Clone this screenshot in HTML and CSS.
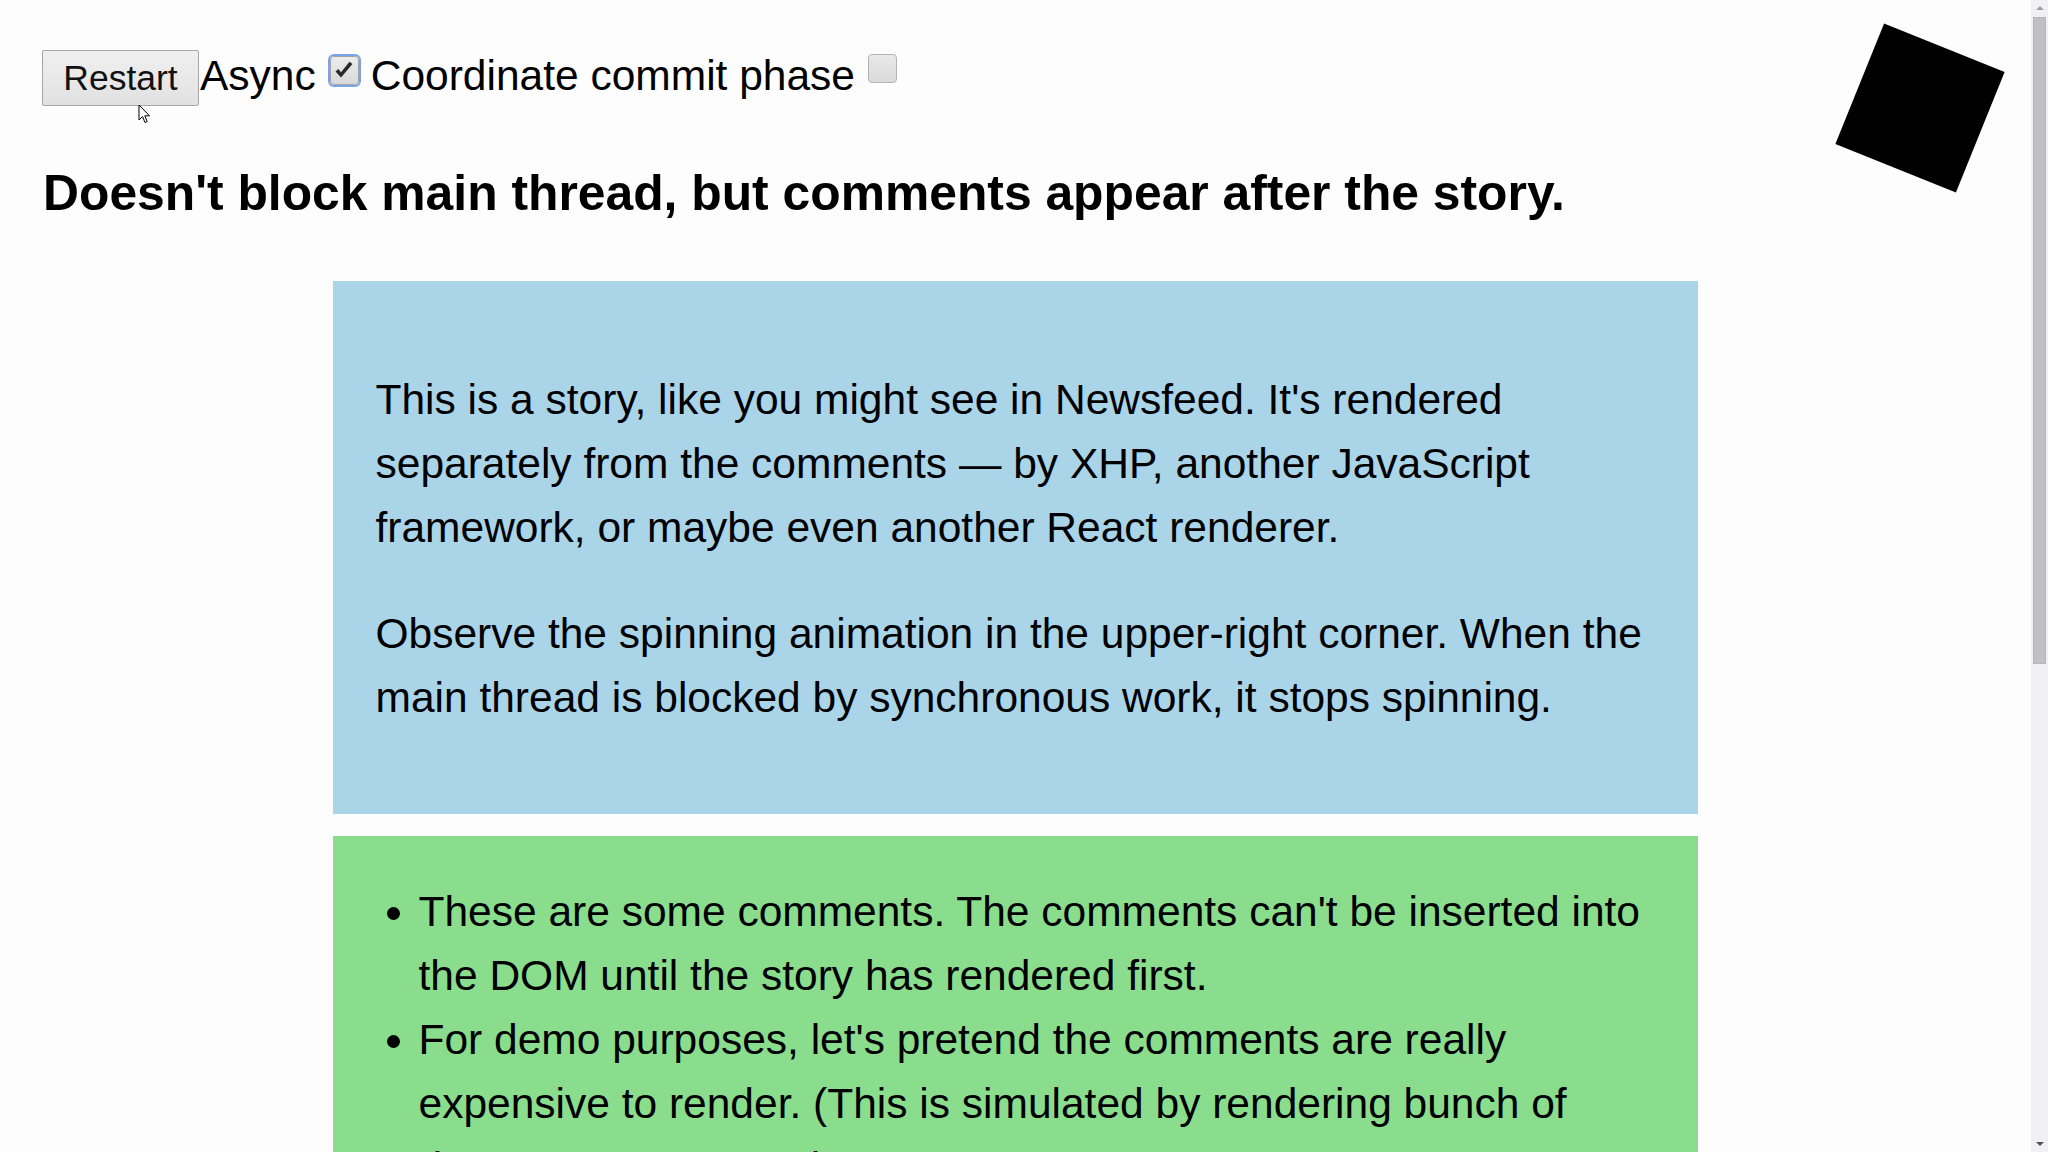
FILE: index.html
```html
<!DOCTYPE html>
<html>
<head>
<meta charset="utf-8">
<title>Coordinate commit phase</title>
<link rel="stylesheet" href="styles.css">
</head>
<body>
<div class="page">
  <div class="controls">
    <button class="btn">Restart</button>
    <span class="label">Async</span>
    <span class="check check-on">
      <svg viewBox="0 0 24 24" width="24" height="24"><path d="M3.5 12.5 L9 18.5 L20.5 5 L17.5 2.8 L9 13.2 L6.3 10 Z" fill="#2a2a2a"/></svg>
    </span>
    <span class="label label-2">Coordinate commit phase</span>
    <span class="check check-off"></span>
  </div>
  <h3 class="title">Doesn't block main thread, but comments appear after the story.</h3>
  <div class="story">
    <p>This is a story, like you might see in Newsfeed. It's rendered separately from the comments — by XHP, another JavaScript framework, or maybe even another React renderer.</p>
    <p>Observe the spinning animation in the upper-right corner. When the main thread is blocked by synchronous work, it stops spinning.</p>
  </div>
  <div class="comments">
    <ul>
      <li>These are some comments. The comments can't be inserted into the DOM until the story has rendered first.</li>
      <li>For demo purposes, let's pretend the comments are really expensive to render. (This is simulated by rendering bunch of dummy components.)</li>
    </ul>
  </div>
</div>
<div class="spinner"></div>
<svg class="cursor" viewBox="0 0 13 21" width="13" height="21"><path d="M1 1 L1 16 L4.5 12.5 L7 18.5 L9.2 17.6 L6.8 11.8 L11.5 11.8 Z" fill="#fff" stroke="#000" stroke-width="1" stroke-linejoin="round"/></svg>
<div class="scrollbar">
  <div class="sb-arrow sb-up"></div>
  <div class="sb-track"><div class="sb-thumb"></div></div>
  <div class="sb-arrow sb-down"></div>
</div>
</body>
</html>
```
FILE: styles.css
```css
html, body {
  margin: 0;
  padding: 0;
  height: 100%;
  overflow: hidden;
  background: #fdfdfd;
}
body {
  font-family: "Liberation Sans", Arial, sans-serif;
  font-size: 42.5px;
  color: #000;
}
.page {
  width: 2031px;
  box-sizing: border-box;
  padding: 50px 0 0 42px;
}
.controls {
  display: flex;
  align-items: baseline;
  height: 56px;
}
.btn {
  font-family: "Liberation Sans", Arial, sans-serif;
  font-size: 35.5px;
  color: #111;
  width: 157px;
  height: 56px;
  padding: 0;
  border: 1px solid #a6a6a6;
  border-radius: 2px;
  background: linear-gradient(#f0f0f0, #e1e1e1);
  box-sizing: border-box;
}
.label {
  margin-left: 1px;
}
.label-2 {
  margin-left: 12px;
}
.check {
  align-self: flex-start;
  box-sizing: border-box;
  width: 29px;
  height: 29px;
  margin-top: 6px;
  border: 1px solid #a3a3a3;
  border-radius: 4px;
  background: linear-gradient(#ececec, #d9d9d9);
  display: flex;
  align-items: center;
  justify-content: center;
}
.check-on {
  margin-left: 14px;
  box-shadow: 0 0 0 2px #7aa3e8;
}
.check-on svg {
  display: block;
}
.check-off {
  margin-left: 13px;
  margin-top: 4px;
  border-color: #b4b4b4;
  background: linear-gradient(#e9e9e9, #dadada);
}
.title {
  font-size: 49.8px;
  font-weight: bold;
  margin: 59px 0 59px 1px;
  line-height: 57px;
}
.story,
.comments {
  width: 1365px;
  margin: 0 auto;
  box-sizing: border-box;
  padding: 42.5px;
  line-height: 64px;
  position: relative;
  left: -21px;
}
.story {
  background: #aad4e8;
  padding-top: 44px;
  padding-bottom: 41px;
}
.story p {
  margin: 42.5px 0;
}
.comments {
  margin-top: 22px;
  background: #8add8d;
  padding-top: 44px;
}
.comments ul {
  margin: 0;
  padding-left: 43px;
}
.spinner {
  position: absolute;
  top: 43px;
  left: 1855px;
  width: 130px;
  height: 130px;
  background: #000;
  transform: rotate(22deg);
}
.cursor {
  position: absolute;
  left: 138px;
  top: 104px;
}
.scrollbar {
  position: fixed;
  top: 0;
  right: 0;
  width: 17px;
  height: 100%;
  background: #f1f0f2;
  display: flex;
  flex-direction: column;
}
.sb-track {
  flex: 1;
  padding: 0 2px;
}
.sb-thumb {
  margin-top: 1px;
  height: 647px;
  background: #c1c0c3;
  border: 1px solid #b6b5b8;
  box-sizing: border-box;
}
.sb-arrow {
  height: 16px;
  display: flex;
  align-items: center;
  justify-content: center;
}
.sb-up::before {
  content: "";
  border-left: 4px solid transparent;
  border-right: 4px solid transparent;
  border-bottom: 4px solid #a3a3a3;
}
.sb-down::before {
  content: "";
  border-left: 4px solid transparent;
  border-right: 4px solid transparent;
  border-top: 4px solid #505050;
}
```
